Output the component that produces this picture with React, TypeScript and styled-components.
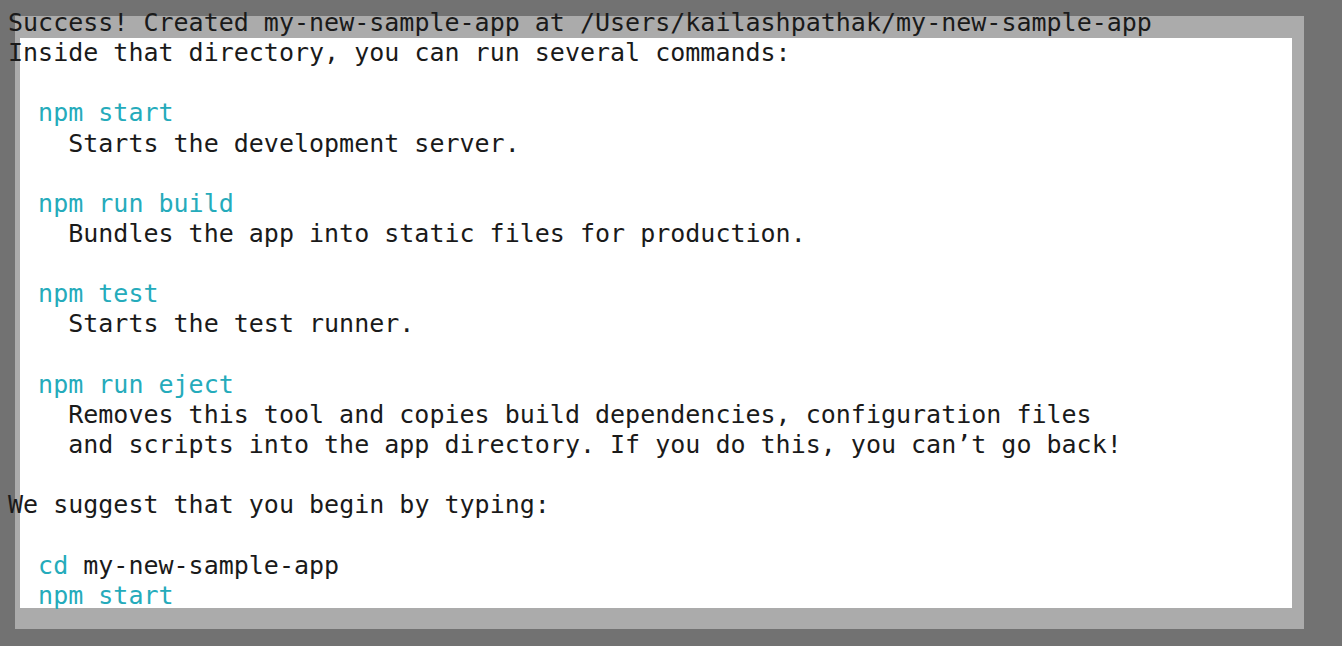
import React from "react";
import styled, { createGlobalStyle } from "styled-components";

const Global = createGlobalStyle`
  html, body { margin: 0; padding: 0; }
  body {
    background: #727272;
    overflow: hidden;
  }
`;

const Stage = styled.div`
  display: grid;
  width: 1342px;
  height: 646px;
  overflow: hidden;
  & > * { grid-area: 1 / 1; }
`;

const Frame = styled.div`
  align-self: start;
  justify-self: start;
  margin: 16px 0 0 15px;
  width: 1289px;
  height: 613px;
  box-sizing: border-box;
  background: #ababab;
  padding: 22px 12px 21px 5px;
  display: flex;
`;

const Sheet = styled.div`
  flex: 1;
  background: #ffffff;
`;

const Terminal = styled.pre`
  margin: 0;
  padding: 8px 0 0 8px;
  font-family: "DejaVu Sans Mono", "Liberation Mono", monospace;
  font-size: 25px;
  line-height: 30.15px;
  color: #1a1a1a;
  white-space: pre;
  position: relative;
`;

const Line = styled.div<{ $indent?: number }>`
  height: 30.15px;
  padding-left: ${(p) => (p.$indent ?? 0) * 15.05}px;
`;

const Cmd = styled.span`
  color: #25abbb;
`;

type Row = { indent?: number; cmd?: string; text?: string };

const rows: Row[] = [
  { text: "Success! Created my-new-sample-app at /Users/kailashpathak/my-new-sample-app" },
  { text: "Inside that directory, you can run several commands:" },
  {},
  { indent: 2, cmd: "npm start" },
  { indent: 4, text: "Starts the development server." },
  {},
  { indent: 2, cmd: "npm run build" },
  { indent: 4, text: "Bundles the app into static files for production." },
  {},
  { indent: 2, cmd: "npm test" },
  { indent: 4, text: "Starts the test runner." },
  {},
  { indent: 2, cmd: "npm run eject" },
  { indent: 4, text: "Removes this tool and copies build dependencies, configuration files" },
  { indent: 4, text: "and scripts into the app directory. If you do this, you can\u2019t go back!" },
  {},
  { text: "We suggest that you begin by typing:" },
  {},
  { indent: 2, cmd: "cd", text: " my-new-sample-app" },
  { indent: 2, cmd: "npm start" },
];

export default function App() {
  return (
    <>
      <Global />
      <Stage>
        <Frame>
          <Sheet />
        </Frame>
        <Terminal>
          {rows.map((r, i) => (
            <Line key={i} $indent={r.indent}>
              {r.cmd && <Cmd>{r.cmd}</Cmd>}
              {r.text}
            </Line>
          ))}
        </Terminal>
      </Stage>
    </>
  );
}
